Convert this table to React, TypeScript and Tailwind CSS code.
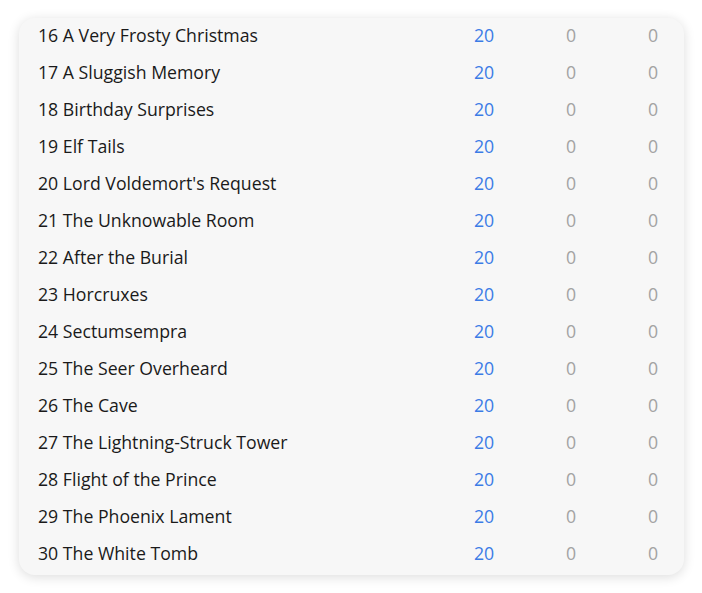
const chapters = [
  '16 A Very Frosty Christmas',
  '17 A Sluggish Memory',
  '18 Birthday Surprises',
  '19 Elf Tails',
  "20 Lord Voldemort's Request",
  '21 The Unknowable Room',
  '22 After the Burial',
  '23 Horcruxes',
  '24 Sectumsempra',
  '25 The Seer Overheard',
  '26 The Cave',
  '27 The Lightning-Struck Tower',
  '28 Flight of the Prince',
  '29 The Phoenix Lament',
  '30 The White Tomb',
];

export default function App() {
  return (
    <div className="w-[702px] h-[593px] bg-white pt-[18px] pl-[19px] font-['Open_Sans',sans-serif]">
      <div className="w-[665px] h-[557px] rounded-[16px] bg-[#f7f7f7] shadow-[0_2px_12px_rgba(0,0,0,0.14)] overflow-hidden">
        {chapters.map((name) => (
          <div key={name} className="flex items-center h-[37px] pb-[2px] text-[17.7px]">
            <div className="flex-1 pl-[19px] text-[#1a1a1a] truncate">{name}</div>
            <div className="w-[72px] text-center text-[#3b7ce6]">20</div>
            <div className="w-[102px] text-center text-[#a3a3a3]">0</div>
            <div className="w-[62px] text-center text-[#a3a3a3]">0</div>
          </div>
        ))}
      </div>
    </div>
  );
}
